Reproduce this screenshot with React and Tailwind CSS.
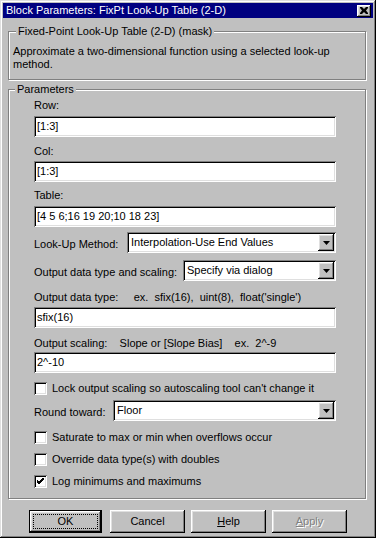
import React from 'react';

const raised = 'shadow-[inset_-1px_-1px_#000,inset_1px_1px_#fff,inset_-2px_-2px_#808080,inset_2px_2px_#dfdfdf]';
const sunken = 'shadow-[inset_1px_1px_#808080,inset_-1px_-1px_#fff,inset_2px_2px_#000,inset_-2px_-2px_#dfdfdf]';
const etched = 'border border-[#808080] shadow-[inset_1px_1px_#fff,1px_1px_#fff]';

function Label({ children, mt }) {
  return <div className={`h-[13px] leading-[13px] whitespace-pre ${mt}`}>{children}</div>;
}

function Field({ value, mt, w = 'w-[302px]' }) {
  return (
    <div className={`h-[21px] ${w} bg-white ${sunken} flex items-center pl-[3px] ${mt}`}>
      <span className="leading-[13px]">{value}</span>
    </div>
  );
}

function Select({ value, w }) {
  return (
    <div className={`h-[21px] ${w} bg-white ${sunken} flex items-center p-[2px]`}>
      <span className="flex-1 pl-[2px] leading-[13px]">{value}</span>
      <div className={`w-[16px] h-[17px] bg-[#c0c0c0] ${raised} flex items-center justify-center`}>
        <svg width="7" height="4" viewBox="0 0 7 4"><path d="M0 0h7L3.5 4z" fill="#000" /></svg>
      </div>
    </div>
  );
}

function Check({ label, checked, mt }) {
  return (
    <div className={`h-[13px] flex items-center gap-[5px] ${mt}`}>
      <div className={`w-[13px] h-[13px] bg-white ${sunken} flex items-center justify-center`}>
        {checked && (
          <svg width="7" height="7" viewBox="0 0 7 7">
            <path d="M0 2l2 2 5-5M0 3l2 2 5-5M0 4l2 2 5-5" stroke="#000" strokeWidth="1" fill="none" shapeRendering="crispEdges" />
          </svg>
        )}
      </div>
      <span className="leading-[13px]">{label}</span>
    </div>
  );
}

function Button({ children, w, def, disabled }) {
  if (def) {
    return (
      <div className={`${w} h-[23px] border border-black`}>
        <div className={`w-full h-full bg-[#c0c0c0] ${raised} p-[3px]`}>
          <div className="w-full h-full border border-dotted border-black flex items-center justify-center leading-[13px]">{children}</div>
        </div>
      </div>
    );
  }
  return (
    <div className={`${w} h-[23px] bg-[#c0c0c0] ${raised} flex items-center justify-center leading-[13px] ${disabled ? 'text-[#808080] [text-shadow:1px_1px_#fff]' : ''}`}>
      {children}
    </div>
  );
}

export default function App() {
  return (
    <div className="w-[386px] h-[545px] bg-white text-[11px] text-black font-['Liberation_Sans',Arial,sans-serif]">
      <div className={`w-[376px] h-[538px] bg-[#c0c0c0] p-[3px] flex flex-col shadow-[inset_-1px_-1px_#000,inset_1px_1px_#dfdfdf,inset_-2px_-2px_#808080,inset_2px_2px_#fff]`}>
        <div className="h-[15px] bg-[#000080] text-white flex items-center pl-[3px] pr-[2px]">
          <span className="flex-1 leading-[13px]">Block Parameters: FixPt Look-Up Table (2-D)</span>
          <div className={`w-[14px] h-[12px] bg-[#c0c0c0] ${raised} flex items-center justify-center`}>
            <svg width="8" height="7" viewBox="0 0 8 7">
              <path d="M0 0h2l2 2 2-2h2v1L6 3.5 8 6v1H6L4 5 2 7H0V6l2-2.5L0 1z" fill="#000" />
            </svg>
          </div>
        </div>

        <div className={`relative mt-[13px] ml-[5px] w-[358px] h-[49px] ${etched} pl-[4px] pt-[13px]`}>
          <span className="absolute -top-[7px] left-[7px] px-[2px] bg-[#c0c0c0] leading-[13px]">Fixed-Point Look-Up Table (2-D) (mask)</span>
          <div className="leading-[13px]">Approximate a two-dimensional function using a selected look-up method.</div>
        </div>

        <div className={`relative mt-[9px] ml-[5px] w-[358px] h-[410px] ${etched} pl-[25px] flex flex-col`}>
          <span className="absolute -top-[7px] left-[6px] px-[2px] bg-[#c0c0c0] leading-[13px]">Parameters</span>
          <Label mt="mt-[9px]">Row:</Label>
          <Field value="[1:3]" mt="mt-[4px]" />
          <Label mt="mt-[8px]">Col:</Label>
          <Field value="[1:3]" mt="mt-[3px]" />
          <Label mt="mt-[7px]">Table:</Label>
          <Field value="[4 5 6;16 19 20;10 18 23]" mt="mt-[4px]" />
          <div className="mt-[5px] flex items-center w-[302px]">
            <span className="w-[93px] leading-[13px] pt-[3px]">Look-Up Method:</span>
            <Select value="Interpolation-Use End Values" w="w-[209px]" />
          </div>
          <div className="mt-[7px] flex items-center w-[302px]">
            <span className="w-[149px] leading-[13px] pt-[3px]">Output data type and scaling:</span>
            <Select value="Specify via dialog" w="w-[153px]" />
          </div>
          <Label mt="mt-[10px]">{'Output data type:     ex.  sfix(16),  uint(8),  float(\'single\')'}</Label>
          <Field value="sfix(16)" mt="mt-[3px]" />
          <Label mt="mt-[9px]">{'Output scaling:    Slope or [Slope Bias]    ex.  2^-9'}</Label>
          <Field value="2^-10" mt="mt-[2px]" />
          <Check label="Lock output scaling so autoscaling tool can't change it" mt="mt-[9px]" />
          <div className="mt-[5px] flex items-center w-[302px]">
            <span className="w-[79px] leading-[13px] pt-[3px]">Round toward:</span>
            <Select value="Floor" w="w-[223px]" />
          </div>
          <Check label="Saturate to max or min when overflows occur" mt="mt-[10px]" />
          <Check label="Override data type(s) with doubles" mt="mt-[9px]" />
          <Check label="Log minimums and maximums" checked mt="mt-[9px]" />
        </div>

        <div className="mt-[11px] ml-[26px] flex">
          <Button w="w-[73px]" def>OK</Button>
          <div className="ml-[8px]"><Button w="w-[75px]">Cancel</Button></div>
          <div className="ml-[6px]"><Button w="w-[75px]"><span><span className="underline">H</span>elp</span></Button></div>
          <div className="ml-[6px]"><Button w="w-[75px]" disabled><span><span className="underline">A</span>pply</span></Button></div>
        </div>
      </div>
    </div>
  );
}
